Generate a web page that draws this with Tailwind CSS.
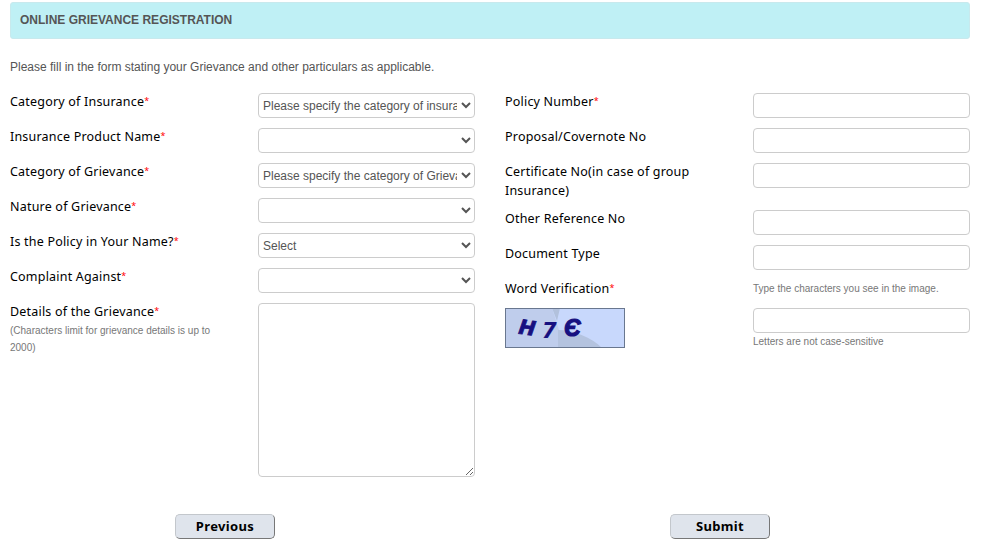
<!DOCTYPE html>
<html lang="en">
<head>
  <meta charset="utf-8"/>
  <meta name="viewport" content="width=device-width, initial-scale=1.0"/>
  <title>Online Grievance Registration</title>
  <script src="https://cdn.jsdelivr.net/npm/@tailwindcss/browser@4"></script>
  <style>
    body { font-family: "Liberation Sans", Arial, sans-serif; color: #555; }
    label, .btn { font-family: "Noto Sans", Verdana, sans-serif; }
    label { font-size: 12.5px; line-height: 19px; letter-spacing: 0.2px; color: #000; }
    label i { font-size: 9px; line-height: 1; font-style: normal; letter-spacing: 0; color: #f00; position: relative; top: -2px; }
    .field { width: 217px; height: 25px; margin-top: 1px; border: 1px solid #ccc; border-radius: 4px; background: #fff; color: #555; font-size: 12px; display: block; }
    select.field { padding: 0 1px 0 0; }
    .btn { width: 100px; height: 25px; border: 1px solid; border-color: #c3c7cc #777 #777 #c3c7cc; border-radius: 5px; background: #dfe4ec; color: #000; font-size: 13px; font-weight: 700; line-height: 20px; padding-bottom: 2px; letter-spacing: 0.35px; }
    small { font-size: 10px; color: #777; }
  </style>
</head>
<body class="h-[548px] overflow-hidden bg-white">
  <div class="w-[960px] ml-2.5 pt-0.5">
    <div class="h-[37px] rounded-[3px] border border-[#c8e9ed] bg-[#bff0f5] pl-[9px] text-xs leading-[34px] font-bold">ONLINE GRIEVANCE REGISTRATION</div>
    <p class="mt-[19px] h-[34px] text-xs leading-[18px]">Please fill in the form stating your Grievance and other particulars as applicable.</p>

    <form class="flex gap-[30px]">
      <!-- Left column -->
      <div class="w-[465px]">
        <div class="flex justify-between h-[35px]">
          <label>Category of Insurance<i>*</i></label>
          <select class="field"><option>Please specify the category of insurance</option></select>
        </div>
        <div class="flex justify-between h-[35px]">
          <label>Insurance Product Name<i>*</i></label>
          <select class="field"></select>
        </div>
        <div class="flex justify-between h-[35px]">
          <label>Category of Grievance<i>*</i></label>
          <select class="field"><option>Please specify the category of Grievance</option></select>
        </div>
        <div class="flex justify-between h-[35px]">
          <label>Nature of Grievance<i>*</i></label>
          <select class="field"></select>
        </div>
        <div class="flex justify-between h-[35px]">
          <label>Is the Policy in Your Name?<i>*</i></label>
          <select class="field"><option>Select</option></select>
        </div>
        <div class="flex justify-between h-[35px]">
          <label>Complaint Against<i>*</i></label>
          <select class="field"></select>
        </div>
        <div class="flex justify-between">
          <div class="w-[217px] flex flex-col">
            <label>Details of the Grievance<i>*</i></label>
            <small class="leading-[17px] mt-px">(Characters limit for grievance details is up to 2000)</small>
          </div>
          <textarea class="w-[217px] h-[174px] mt-px rounded border border-[#ccc] bg-white resize"></textarea>
        </div>
      </div>

      <!-- Right column -->
      <div class="w-[465px]">
        <div class="flex justify-between h-[35px]">
          <label>Policy Number<i>*</i></label>
          <input class="field" type="text"/>
        </div>
        <div class="flex justify-between h-[35px]">
          <label>Proposal/Covernote No</label>
          <input class="field" type="text"/>
        </div>
        <div class="flex justify-between h-[47px]">
          <label class="w-[217px]">Certificate No(in case of group Insurance)</label>
          <input class="field" type="text"/>
        </div>
        <div class="flex justify-between h-[35px]">
          <label>Other Reference No</label>
          <input class="field" type="text"/>
        </div>
        <div class="flex justify-between h-[35px]">
          <label>Document Type</label>
          <input class="field" type="text"/>
        </div>
        <div class="flex justify-between">
          <div>
            <label class="block">Word Verification<i>*</i></label>
            <svg class="mt-[10px] block" width="120" height="40" viewBox="0 0 120 40">
              <rect width="120" height="40" fill="#c8d8fc"/>
              <path d="M0 0H47L54 22V40H0Z" fill="#bfcdec"/>
              <path d="M47 0H55L52 13Z" fill="#b2c1dc"/>
              <path d="M53 22C68 22 86 29 97 40H53Z" fill="#b4c3df"/>
              <rect x=".5" y=".5" width="119" height="39" fill="none" stroke="#69778f"/>
              <g fill="#171080" stroke="#171080" font-family="DejaVu Sans" font-weight="700" font-style="italic">
                <text x="14" y="27" font-size="20" stroke-width=".8" transform="rotate(8 24 20)">H</text>
                <text x="37" y="30" font-size="21" stroke-width=".2">7</text>
                <text x="59" y="28" font-size="23" stroke-width="1.2" font-family="Liberation Sans">Є</text>
              </g>
            </svg>
          </div>
          <div class="w-[217px] flex flex-col">
            <small class="h-[28px] leading-[19px]">Type the characters you see in the image.</small>
            <input class="field" type="text"/>
            <small class="leading-[17px]">Letters are not case-sensitive</small>
          </div>
        </div>
      </div>
    </form>

    <div class="mt-[37px] flex pl-[165px] gap-[395px]">
      <button class="btn" type="button">Previous</button>
      <button class="btn" type="button">Submit</button>
    </div>
  </div>
</body>
</html>
